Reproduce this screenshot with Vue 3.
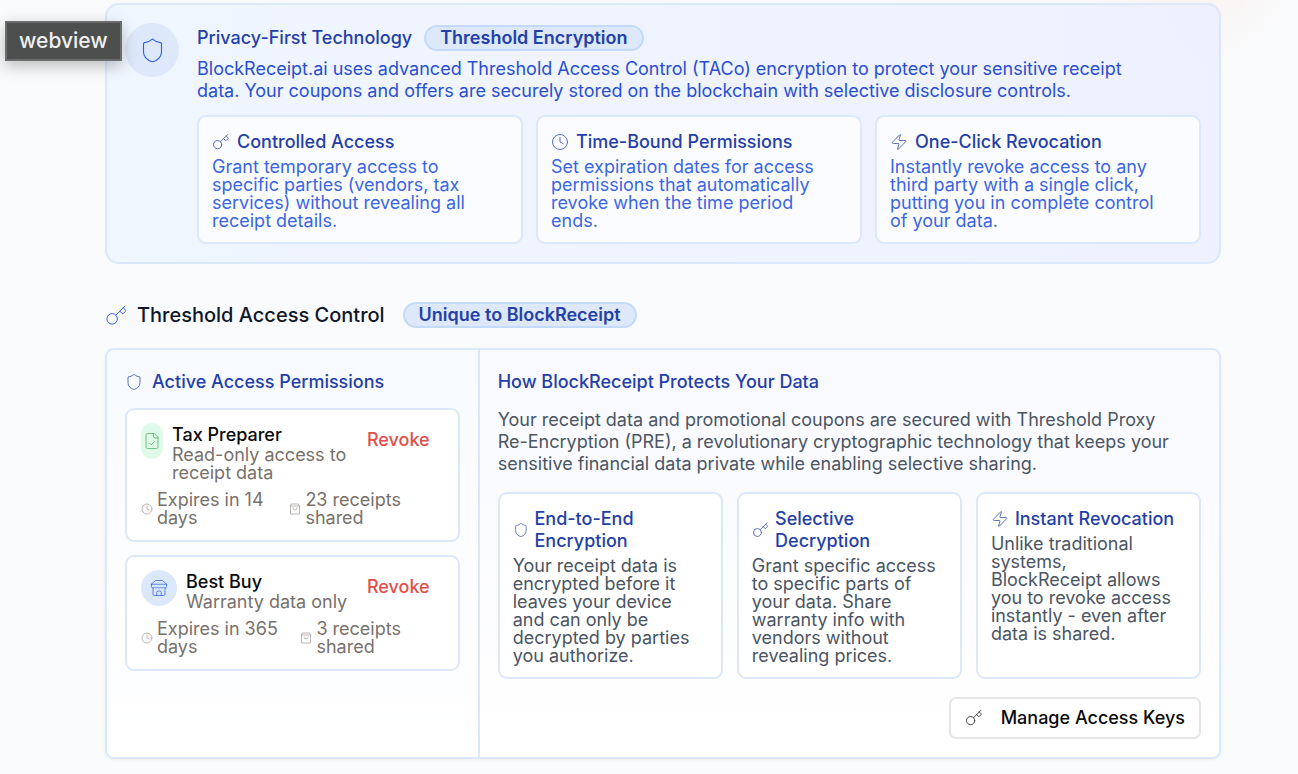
<script setup>
const icons = {
  shield: ['M20 13c0 5-3.5 7.5-7.66 8.95a1 1 0 0 1-.67-.01C7.5 20.5 4 18 4 13V6a1 1 0 0 1 1-1c2 0 4.5-1.2 6.24-2.72a1.17 1.17 0 0 1 1.52 0C14.51 3.81 17 5 19 5a1 1 0 0 1 1 1z'],
  key: [
    'm15.5 7.5 2.3 2.3a1 1 0 0 0 1.4 0l2.1-2.1a1 1 0 0 0 0-1.4L19 4',
    'm21 2-9.6 9.6',
    'M13 15.5a5.5 5.5 0 1 1-11 0a5.5 5.5 0 0 1 11 0'
  ],
  clock: ['M22 12a10 10 0 1 1-20 0a10 10 0 0 1 20 0', 'M12 6v6l4 2'],
  zap: ['M4 14a1 1 0 0 1-.78-1.63l9.9-10.2a.5.5 0 0 1 .86.46l-1.92 6.02A1 1 0 0 0 13 10h7a1 1 0 0 1 .78 1.63l-9.9 10.2a.5.5 0 0 1-.86-.46l1.92-6.02A1 1 0 0 0 11 14z'],
  file: [
    'M15 2H6a2 2 0 0 0-2 2v16a2 2 0 0 0 2 2h12a2 2 0 0 0 2-2V7Z',
    'M14 2v4a2 2 0 0 0 2 2h4',
    'm9 15 2 2 4-4'
  ],
  store: [
    'm2 7 4.41-4.41A2 2 0 0 1 7.83 2h8.34a2 2 0 0 1 1.42.59L22 7',
    'M4 12v8a2 2 0 0 0 2 2h12a2 2 0 0 0 2-2v-8',
    'M15 22v-4a2 2 0 0 0-2-2h-2a2 2 0 0 0-2 2v4',
    'M2 7h20',
    'M22 7v3a2 2 0 0 1-2 2a2.7 2.7 0 0 1-1.59-.63.7.7 0 0 0-.82 0A2.7 2.7 0 0 1 16 12a2.7 2.7 0 0 1-1.59-.63.7.7 0 0 0-.82 0A2.7 2.7 0 0 1 12 12a2.7 2.7 0 0 1-1.59-.63.7.7 0 0 0-.82 0A2.7 2.7 0 0 1 8 12a2.7 2.7 0 0 1-1.59-.63.7.7 0 0 0-.82 0A2.7 2.7 0 0 1 4 12a2 2 0 0 1-2-2V7'
  ],
  bag: ['M3 6v16h18V6l-2-4H5Z', 'M3 6h18', 'M16 10a4 4 0 0 1-8 0']
}

const intro = 'BlockReceipt.ai uses advanced Threshold Access Control (TACo) encryption to protect your sensitive receipt\ndata. Your coupons and offers are securely stored on the blockchain with selective disclosure controls.'

const summary = 'Your receipt data and promotional coupons are secured with Threshold Proxy\nRe-Encryption (PRE), a revolutionary cryptographic technology that keeps your\nsensitive financial data private while enabling selective sharing.'

const features = [
  { icon: 'key', title: 'Controlled Access', text: 'Grant temporary access to\nspecific parties (vendors, tax\nservices) without revealing all\nreceipt details.' },
  { icon: 'clock', title: 'Time-Bound Permissions', text: 'Set expiration dates for access\npermissions that automatically\nrevoke when the time period\nends.' },
  { icon: 'zap', title: 'One-Click Revocation', text: 'Instantly revoke access to any\nthird party with a single click,\nputting you in complete control\nof your data.' }
]

const permissions = [
  { icon: 'file', tone: 'green', name: 'Tax Preparer', scope: 'Read-only access to\nreceipt data', expires: 'Expires in 14 days', shared: '23 receipts shared' },
  { icon: 'store', tone: 'blue', name: 'Best Buy', scope: 'Warranty data only', expires: 'Expires in 365 days', shared: '3 receipts shared' }
]

const protections = [
  { icon: 'shield', title: 'End-to-End Encryption', text: 'Your receipt data is\nencrypted before it\nleaves your device\nand can only be\ndecrypted by parties\nyou authorize.' },
  { icon: 'key', title: 'Selective Decryption', text: 'Grant specific access\nto specific parts of\nyour data. Share\nwarranty info with\nvendors without\nrevealing prices.' },
  { icon: 'zap', title: 'Instant Revocation', text: 'Unlike traditional\nsystems,\nBlockReceipt allows\nyou to revoke access\ninstantly - even after\ndata is shared.' }
]
</script>

<template>
  <div class="page">
    <span class="tooltip">webview</span>

    <section class="privacy">
      <div class="privacy-icon">
        <svg class="icon icon-lg" viewBox="0 0 24 24"><path v-for="d in icons.shield" :key="d" :d="d" /></svg>
      </div>
      <div class="privacy-body">
        <div class="privacy-head">
          <h2 class="privacy-title">Privacy-First Technology</h2>
          <span class="badge">Threshold Encryption</span>
        </div>
        <p class="privacy-text">{{ intro }}</p>
        <div class="features">
          <article v-for="f in features" :key="f.title" class="feature">
            <h3 class="feature-title">
              <svg class="icon" viewBox="0 0 24 24"><path v-for="d in icons[f.icon]" :key="d" :d="d" /></svg>
              {{ f.title }}
            </h3>
            <p class="feature-text">{{ f.text }}</p>
          </article>
        </div>
      </div>
    </section>

    <div class="section-head">
      <svg class="icon icon-md" viewBox="0 0 24 24"><path v-for="d in icons.key" :key="d" :d="d" /></svg>
      <h2 class="section-title">Threshold Access Control</h2>
      <span class="badge">Unique to BlockReceipt</span>
    </div>

    <section class="panel">
      <div class="permissions">
        <h3 class="panel-title">
          <svg class="icon" viewBox="0 0 24 24"><path v-for="d in icons.shield" :key="d" :d="d" /></svg>
          Active Access Permissions
        </h3>
        <article v-for="p in permissions" :key="p.name" class="permission">
          <div class="permission-top">
            <div class="party">
              <div class="party-icon" :class="p.tone">
                <svg class="icon" viewBox="0 0 24 24"><path v-for="d in icons[p.icon]" :key="d" :d="d" /></svg>
              </div>
              <div class="party-info">
                <h4 class="party-name">{{ p.name }}</h4>
                <p class="party-scope">{{ p.scope }}</p>
              </div>
            </div>
            <button type="button" class="revoke">Revoke</button>
          </div>
          <div class="meta">
            <span class="meta-item">
              <svg class="icon icon-sm" viewBox="0 0 24 24"><path v-for="d in icons.clock" :key="d" :d="d" /></svg>
              <span>{{ p.expires }}</span>
            </span>
            <span class="meta-item">
              <svg class="icon icon-sm" viewBox="0 0 24 24"><path v-for="d in icons.bag" :key="d" :d="d" /></svg>
              <span>{{ p.shared }}</span>
            </span>
          </div>
        </article>
      </div>

      <div class="how">
        <h3 class="panel-title">How BlockReceipt Protects Your Data</h3>
        <p class="how-text">{{ summary }}</p>
        <div class="protections">
          <article v-for="p in protections" :key="p.title" class="protection">
            <h4 class="protection-title">
              <svg class="icon" viewBox="0 0 24 24"><path v-for="d in icons[p.icon]" :key="d" :d="d" /></svg>
              <span>{{ p.title }}</span>
            </h4>
            <p class="protection-text">{{ p.text }}</p>
          </article>
        </div>
        <button type="button" class="manage">
          <svg class="icon" viewBox="0 0 24 24"><path v-for="d in icons.key" :key="d" :d="d" /></svg>
          Manage Access Keys
        </button>
      </div>
    </section>
  </div>
</template>

<style>
body {
  margin: 0;
  background: #f9fafc;
}
</style>

<style scoped>
.page {
  box-sizing: border-box;
  position: relative;
  min-height: 100vh;
  padding: 3px 77px 16px 105px;
  background: radial-gradient(circle at 1190px -40px, rgba(253, 206, 175, 0.2), transparent 110px), #f9fafc;
  font-family: Inter, "Liberation Sans", sans-serif;
  font-size: 18px;
  line-height: 22px;
  color: #0a0a0a;
}
h2, h3, h4, p {
  margin: 0;
  font-size: inherit;
  font-weight: 500;
}
p {
  font-weight: 400;
  white-space: pre-line;
}
button {
  font: inherit;
  cursor: pointer;
}
.icon {
  width: 18px;
  height: 18px;
  flex-shrink: 0;
  fill: none;
  stroke: currentColor;
  stroke-width: 1;
  stroke-linecap: round;
  stroke-linejoin: round;
}
.icon-lg {
  width: 27px;
  height: 27px;
}
.icon-md {
  width: 23px;
  height: 23px;
  color: #2f5fe8;
}
.icon-sm {
  width: 12px;
  height: 12px;
}
.tooltip {
  position: absolute;
  top: 21px;
  left: 5px;
  padding: 4px 12px;
  border: 2px solid #6b6d6c;
  background: #4d4f4e;
  color: #f0f0f0;
  font-size: 21px;
  font-weight: 500;
  line-height: 28px;
  box-shadow: 0 5px 16px rgba(0, 0, 0, 0.25);
}
.privacy {
  display: flex;
  align-items: flex-start;
  gap: 18px;
  padding: 18px;
  border: 2px solid #dbe8fc;
  border-radius: 14px;
  background: linear-gradient(90deg, rgba(239, 246, 255, 0.95), rgba(238, 240, 255, 0.95));
}
.privacy-icon {
  display: flex;
  flex-shrink: 0;
  align-items: center;
  justify-content: center;
  width: 54px;
  height: 54px;
  border-radius: 50%;
  background: #dde8fa;
  color: #2f5fe8;
}
.privacy-body {
  flex: 1;
  min-width: 0;
}
.privacy-head {
  display: flex;
  align-items: center;
  gap: 12px;
  padding-top: 2px;
  color: #2440a8;
}
.badge {
  padding: 0 14px;
  border: 2px solid #c3dafa;
  border-radius: 14px;
  background: #dde8fa;
  color: #2440a8;
  font-weight: 600;
}
.privacy-text {
  margin-top: 7px;
  color: #2a4fd0;
}
.features {
  display: grid;
  grid-template-columns: repeat(3, minmax(0, 1fr));
  gap: 13px;
  margin-top: 13px;
}
.feature,
.protection {
  padding: 14px 13px 12px;
  border: 2px solid #dbe8fc;
  border-radius: 9px;
  background: #fbfcff;
}
.feature-title {
  display: flex;
  align-items: center;
  gap: 7px;
  color: #2440a8;
}
.feature-text {
  margin-top: 5px;
  line-height: 18px;
  color: #3b66e4;
}
.section-head {
  display: flex;
  align-items: center;
  margin: 38px 0 20px;
}
.section-title {
  margin: 0 18px 0 9px;
  font-size: 20px;
  color: #0f172a;
}
.panel {
  display: grid;
  grid-template-columns: minmax(0, 1fr) minmax(0, 2fr);
  border: 2px solid #dbe8fc;
  border-radius: 9px;
  overflow: hidden;
  box-shadow: 0 1px 3px rgba(0, 0, 0, 0.06);
}
.permissions {
  padding: 18px;
  background: linear-gradient(#f7faff, #ffffff);
}
.panel-title {
  display: flex;
  align-items: center;
  gap: 9px;
  padding-top: 3px;
  color: #2440a8;
}
.permission {
  margin-top: 13px;
  padding: 13px 14px;
  border: 2px solid #dbe8fc;
  border-radius: 9px;
  background: #ffffff;
}
.panel-title + .permission {
  margin-top: 15px;
}
.permission-top {
  display: flex;
  align-items: flex-start;
  justify-content: space-between;
}
.party {
  display: flex;
  align-items: flex-start;
  gap: 9px;
  min-width: 0;
}
.party-icon {
  display: flex;
  flex-shrink: 0;
  align-items: center;
  justify-content: center;
  width: 36px;
  height: 36px;
  border-radius: 18px;
}
.party-icon.green {
  width: 22px;
  background: #dffbe8;
  color: #4aae68;
}
.party-icon.blue {
  background: #dbe8fc;
  color: #2f62e8;
}
.party-info {
  padding-top: 1px;
}
.party-name {
  color: #0a0a0a;
}
.party-scope {
  line-height: 18px;
  color: #78716c;
}
.revoke {
  flex-shrink: 0;
  padding: 6px 14px 4px;
  border: 0;
  background: transparent;
  color: #e04f4a;
  font-weight: 500;
}
.meta {
  display: flex;
  justify-content: space-between;
  margin-top: 9px;
  line-height: 18px;
  color: #78716c;
}
.meta-item {
  display: flex;
  align-items: center;
  gap: 4px;
}
.how {
  display: flex;
  flex-direction: column;
  padding: 18px;
  border-left: 2px solid #dbe8fc;
  background: linear-gradient(#f8f9ff, #ffffff);
}
.how-text {
  margin-top: 16px;
  color: #4b5563;
}
.protections {
  display: grid;
  grid-template-columns: repeat(3, minmax(0, 1fr));
  gap: 14px;
  margin-top: 17px;
}
.protection {
  background: #ffffff;
}
.protection-title {
  display: flex;
  align-items: center;
  gap: 6px;
  color: #2440a8;
}
.protection-title .icon {
  flex-shrink: 1;
}
.protection-text {
  margin-top: 5px;
  line-height: 18px;
  color: #4b5563;
}
.manage {
  display: flex;
  align-items: center;
  align-self: flex-end;
  gap: 18px;
  margin-top: 18px;
  padding: 8px 14px;
  border: 2px solid #e5e5e5;
  border-radius: 7px;
  background: #ffffff;
  color: #0a0a0a;
  font-weight: 500;
}
</style>
